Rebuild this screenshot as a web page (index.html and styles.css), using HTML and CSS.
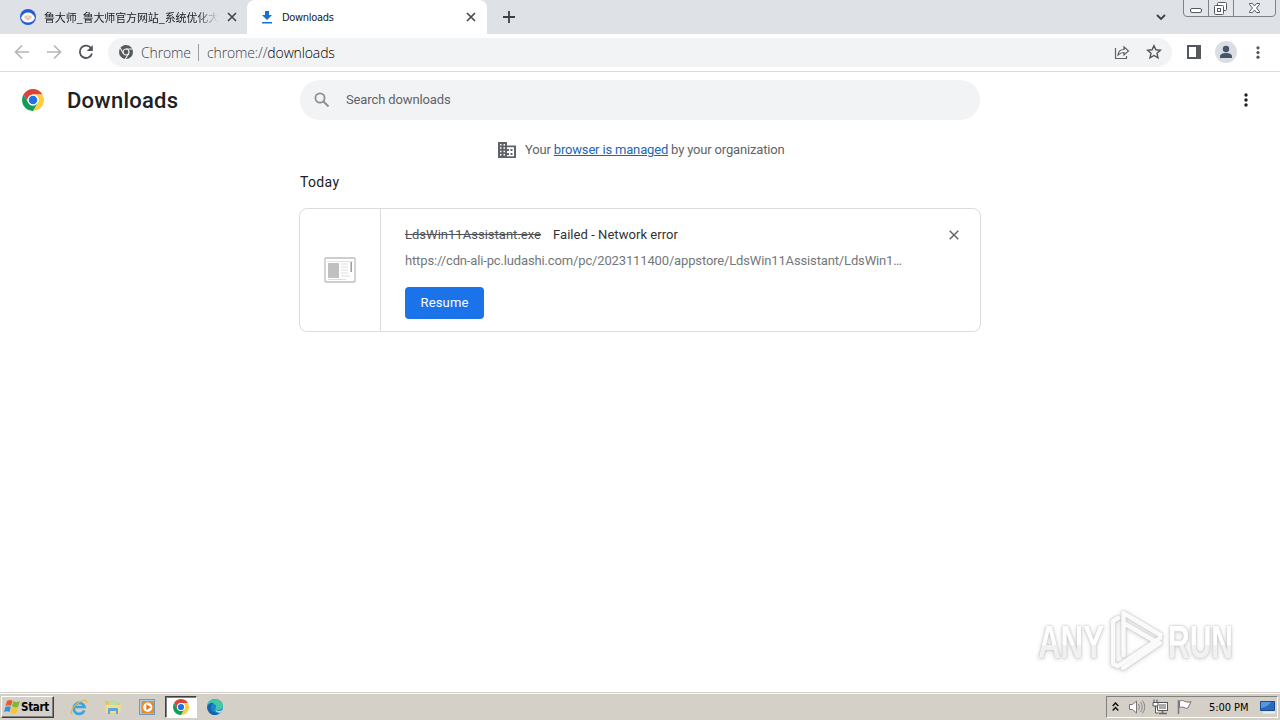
FILE: index.html
```html
<!DOCTYPE html>
<html lang="en">
<head>
<meta charset="utf-8">
<title>Downloads</title>
<link rel="stylesheet" href="styles.css">
</head>
<body>
<svg class="defs" aria-hidden="true">
  <symbol id="chrome" viewBox="0 0 48 48">
    <path fill="#db4437" d="M24 12H44.78A24 24 0 0 0 3.22 12L13.6 30A12 12 0 0 1 24 12z"/>
    <path fill="#ffcd40" transform="rotate(120 24 24)" d="M24 12H44.78A24 24 0 0 0 3.22 12L13.6 30A12 12 0 0 1 24 12z"/>
    <path fill="#0f9d58" transform="rotate(240 24 24)" d="M24 12H44.78A24 24 0 0 0 3.22 12L13.6 30A12 12 0 0 1 24 12z"/>
    <circle cx="24" cy="24" r="12" fill="#fff"/><circle cx="24" cy="24" r="9.3" fill="#1a73e8"/>
  </symbol>
  <symbol id="close" viewBox="0 0 10 10"><path d="M1 1l8 8M9 1l-8 8" fill="none" stroke="currentColor" stroke-width="1.7"/></symbol>
  <symbol id="dots" viewBox="0 0 4 14"><circle cx="2" cy="2" r="1.7"/><circle cx="2" cy="7" r="1.7"/><circle cx="2" cy="12" r="1.7"/></symbol>
  <linearGradient id="fade" x1="0" y1="0" x2="0" y2="1"><stop offset=".55" stop-color="#fff"/><stop offset=".56" stop-color="#f1f1f1"/></linearGradient>
</svg>
<div class="screen">
  <header class="tabstrip">
    <div class="tab tab-back">
      <svg class="favicon" viewBox="0 0 16 16"><circle cx="8" cy="8" r="8" fill="#2459df"/><path d="M1 9q2-5.500 7-5.500T15 9q-2 4.500-7 4.500T1 9z" fill="#fff"/><ellipse cx="8" cy="8.400" rx="4" ry="2.800" fill="#f4dfce"/><path d="M5.500 8h1.500M9 8h1.500M7 10h2" stroke="#a5877b" stroke-width=".7"/></svg>
      <span class="tab-title cjk">鲁大师_鲁大师官方网站_系统优化大</span>
      <svg class="tab-close"><use href="#close"/></svg>
    </div>
    <div class="tab tab-active">
      <svg class="dl-icon" viewBox="0 0 10 13"><path d="M3 0h4v4h3L5 9 0 4h3zM0 11h10v1.500H0z" fill="#1a70d2"/></svg>
      <span class="tab-title">Downloads</span>
      <svg class="tab-close"><use href="#close"/></svg>
    </div>
    <svg class="newtab" viewBox="0 0 12 12"><path d="M6 0v12M0 6h12" stroke="#3c4043" stroke-width="1.800"/></svg>
    <svg class="chevron" viewBox="0 0 10 6"><path d="M1 1l4 4 4-4" fill="none" stroke="#3c4043" stroke-width="1.800"/></svg>
    <svg class="winbtns" viewBox="0 0 94 17">
      <path d="M.5-1v14q0 3.500 3.500 3.500h85q3.500 0 3.500-3.500V-1" fill="#e3e6eb" stroke="#7e828a"/>
      <path d="M25.500 0v16M50.500 0v16" stroke="#7e828a"/>
      <g fill="#fff" stroke="#55595f"><rect x="7.500" y="8.500" width="11" height="4" rx="1.500"/><rect x="34.500" y="2.500" width="9" height="8" rx="1"/><rect x="31.500" y="5.500" width="9" height="9" rx="1"/><rect x="34.500" y="8.500" width="3" height="3"/><path d="M66.500 3.500h3l2 2.500 2-2.500h3v1l-3 3.500 3 3.500v1h-3l-2-2.500-2 2.500h-3v-1l3-3.500-3-3.500z"/></g>
    </svg>
  </header>

  <nav class="toolbar">
    <svg class="nav-icon" viewBox="0 0 16 16"><path d="M15 8H2M8 1.500L1.500 8 8 14.500" fill="none" stroke="#b4b7ba" stroke-width="1.700"/></svg>
    <svg class="nav-icon" viewBox="0 0 16 16"><path d="M1 8h13M8 1.500L14.500 8 8 14.500" fill="none" stroke="#b4b7ba" stroke-width="1.700"/></svg>
    <svg class="nav-icon" viewBox="0 0 16 16"><path d="M13.300 4.500A6.200 6.200 0 1 0 14 9.500" fill="none" stroke="#505357" stroke-width="1.800"/><path d="M14.800 1v6h-6z" fill="#505357"/></svg>
    <div class="omnibox">
      <svg class="omni-chrome" viewBox="0 0 14 14"><circle cx="7" cy="7" r="7" fill="#55585c"/><circle cx="7" cy="7" r="3" fill="none" stroke="#f1f3f4" stroke-width="1.200"/><path d="M7 4h6.500M4.400 8.500L1.200 3M9.600 8.500L6.400 14" stroke="#f1f3f4" stroke-width="1.100"/></svg>
      <span class="omni-label">Chrome</span>
      <span class="omni-sep"></span>
      <span class="omni-url">chrome://<b>downloads</b></span>
      <svg class="share" viewBox="0 0 16 16"><path d="M1.500 4v10.500h11V12M4 11q.5-5.500 6-5.500V2.800L14.500 7 10 11V8.500q-3.500 0-6 2.500z" fill="none" stroke="#5f6368" stroke-width="1.200"/></svg>
      <svg class="star" viewBox="0 0 16 16"><path d="M8 1.700l1.900 4.100 4.500.5-3.400 3 1 4.500L8 11.500l-4 2.300 1-4.500-3.400-3 4.500-.5z" fill="none" stroke="#505357" stroke-width="1.400"/></svg>
    </div>
    <svg class="panel" viewBox="0 0 14 14"><path d="M1 1h12v12H1z" fill="none" stroke="#55585c" stroke-width="2"/><path d="M9 1h5v12H9z" fill="#55585c"/></svg>
    <svg class="avatar" viewBox="0 0 22 22"><circle cx="11" cy="11" r="11" fill="#dadde3"/><circle cx="11" cy="8" r="3.200" fill="#46536c"/><path d="M5 17v-1.500q0-3.500 6-3.500t6 3.500V17z" fill="#46536c"/></svg>
    <svg class="menu-dots"><use href="#dots"/></svg>
  </nav>

  <main class="page">
    <div class="page-head">
      <svg class="logo"><use href="#chrome"/></svg>
      <h1>Downloads</h1>
      <div class="search">
        <svg viewBox="0 0 16 16"><circle cx="6" cy="6" r="4.600" fill="none" stroke="#8b8e92" stroke-width="1.800"/><path d="M9.500 9.500l5 5" stroke="#8b8e92" stroke-width="2"/></svg>
        <span>Search downloads</span>
      </div>
      <svg class="page-dots"><use href="#dots"/></svg>
    </div>
    <div class="managed">
      <svg viewBox="0 0 18 16"><path d="M0 0h9v3.500h9V16H0z" fill="#5f6368"/><path d="M2 2h1.500v1.500H2zM5.500 2H7v1.500H5.500zM2 5.300h1.500v1.500H2zM5.500 5.300H7v1.500H5.500zM2 8.700h1.500v1.500H2zM5.500 8.700H7v1.500H5.500zM2 12h1.500v1.500H2zM5.500 12H7v1.500H5.500zM9 5.300h7v9H9z" fill="#fff"/><path d="M9 7h2v2H9zM12.500 7h2v2h-2zM9 11h2v2H9zM12.500 11h2v2h-2z" fill="#5f6368"/></svg>
      <span class="managed-text">Your <a>browser is managed</a> by your organization</span>
    </div>
    <section class="downloads">
      <h2>Today</h2>
      <article class="card">
        <div class="thumb"><svg viewBox="0 0 32 26"><rect x="1" y="1" width="30" height="24" rx="1" fill="#fff" stroke="#bdbdbd" stroke-width="1.300"/><path d="M3 4.500h26" stroke="#e2e2e2"/><path d="M4 6h11v15H4z" fill="#c0c0c0"/><path d="M17 7h7M17 10h7M17 13h7M17 16h7M17 19h9M4 22.500h18" stroke="#ddd"/><path d="M27.200 5v10" stroke="#999" stroke-width="1.500"/></svg></div>
        <div class="details">
          <div class="name-row"><s>LdsWin11Assistant.exe</s><span class="status">Failed - Network error</span></div>
          <div class="url">https://cdn-ali-pc.ludashi.com/pc/2023111400/appstore/LdsWin11Assistant/LdsWin1…</div>
          <div class="resume">Resume</div>
        </div>
        <svg class="card-close" viewBox="0 0 10 10"><path d="M.7.7l8.600 8.600M9.300.7L.7 9.300" stroke="#5f6368" stroke-width="1.400"/></svg>
      </article>
    </section>
  </main>

  <footer class="taskbar">
    <div class="start">
      <svg viewBox="0 0 17 16"><path d="M3 2q3-2 5.500-.3L7 7Q4.500 5.500 1.500 7z" fill="#e65c28"/><path d="M9.200 2Q12 4 16 2L14 8q-3 1.300-6-.5z" fill="#7db83a"/><path d="M1.300 8q3-1.500 5.500 0L5.500 13Q3 11.500 0 13z" fill="#3d8ddb"/><path d="M7.600 8.300q3 1.800 6.300.5l-1.500 5.400q-3 1.300-6-.7z" fill="#f8c431"/></svg>
      <span>Start</span>
    </div>
    <svg class="task ie" viewBox="0 0 18 18"><path d="M14.300 12.500A5.500 5.500 0 1 1 14.500 9H5" fill="none" stroke="#39a4df" stroke-width="2.700"/><path d="M2.500 16q-3-1 .5-6T12 3q5-2.500 4.500 2" fill="none" stroke="#e5b844" stroke-width="1.300"/></svg>
    <svg class="task" viewBox="0 0 18 18"><path d="M1 3h6l1.500 2H16V15H2z" fill="#e7c763"/><path d="M5 2.500h8v6H5z" fill="#b9dfa4"/><path d="M1 7h16l-1 8H2z" fill="#f5dc8c"/><path d="M4 16v-5q0-1 1-1h8q1 0 1 1v5h-2v-3H6v3z" fill="#58a9d9"/></svg>
    <svg class="task" viewBox="0 0 18 18"><rect x="1.500" y="1.500" width="15" height="15" fill="#a8cef0" stroke="#6a9cca"/><rect x="3.500" y="3" width="12.500" height="12.500" rx="1" fill="#f08a1c"/><circle cx="9.700" cy="9.200" r="4.600" fill="#fff"/><path d="M8.300 6.200l4.700 3-4.700 3z" fill="#e77716"/></svg>
    <div class="task-active"><svg><use href="#chrome"/></svg></div>
    <svg class="task edge" viewBox="0 0 18 18"><circle cx="9" cy="9" r="8" fill="#1688ce"/><path d="M1 9C1-1 17-1 17 8q0 4-5 4-3 0-2-2 1-4-3-4-5 0-6 5z" fill="#43c8a5"/><path d="M1 9q2-5 7-4-4 2-3 6t8 4q-3 3-7 1.500T1 9z" fill="#1762ac"/><path d="M10 10q-1 3 3 3 2 0 4-1.500Q16 14 13.500 15 8 14 10 10z" fill="#d4d0c8"/></svg>
    <div class="tray">
      <svg class="up" viewBox="0 0 7 10"><path d="M.7 4l2.800-3 2.800 3M.7 8.500l2.800-3 2.800 3" fill="none" stroke="#111" stroke-width="1.500"/></svg>
      <svg class="sound" viewBox="0 0 18 16"><path d="M1.500 5.500h3L8.500 2v12l-4-3.500h-3z" fill="#fff" stroke="#777"/><path d="M10.500 5q2 3 0 6M12.500 3q3.500 5 0 10M14.500 1.500q4.500 6.500 0 13" fill="none" stroke="#898989"/></svg>
      <svg class="network" viewBox="0 0 17 16"><rect x="5.500" y="3.500" width="10" height="8" fill="#fff" stroke="#555"/><path d="M7 5h7v5H7z" fill="#aaa"/><path d="M7 14.500h8M10.500 12v2" stroke="#666" stroke-width="1.500"/><path d="M2 .5v3M5 .5v3M1 3.500h5v3.500H1zM3.500 7v7h3" fill="#fff" stroke="#555"/></svg>
      <svg class="flag" viewBox="0 0 17 16"><path d="M2.500 1v14" stroke="#777" stroke-width="1.500"/><path d="M3.500 2q3-1.500 5.500.5 3 1.500 6 0L12 9q-2 1-4-.5-2-1-4.500 0z" fill="#fff" stroke="#777"/></svg>
      <span class="clock">5:00 PM</span>
      <svg class="desktop" viewBox="0 0 16 14"><path d="M.5 1.500h14v9H.5z" fill="#2869bd" stroke="#174e92"/><path d="M1 2h10q-3 5-10 6z" fill="#5497de"/><path d="M3 12.500h12" stroke="#eee" stroke-width="2"/></svg>
    </div>
  </footer>

  <svg class="watermark" viewBox="0 0 220 70">
    <g class="mark-letters"><text x="8" y="53" textLength="66" lengthAdjust="spacingAndGlyphs">ANY</text><text x="138" y="53" textLength="65" lengthAdjust="spacingAndGlyphs">RUN</text></g>
    <path class="mark-symbol" d="M93.500 8v42M93.500 8l37 22M93.500 18l33 19M130 38L93 63M88 13l-5 3v43l5 2 42-28"/>
  </svg>
</div>
</body>
</html>
```

FILE: styles.css
```css
* { box-sizing: border-box; }
body { margin: 0; font-family: Roboto, sans-serif; color: #202124; }
svg { display: block; flex: none; }
.defs { position: absolute; width: 0; height: 0; }
.screen { position: relative; display: flex; flex-direction: column; width: 1280px; height: 720px; overflow: hidden; background: #fff; }

.tabstrip { display: flex; height: 34px; background: #dee1e6; }
.tab { display: flex; align-items: center; height: 34px; font: 11px/16px "DejaVu Sans Condensed", "Noto Sans CJK SC", sans-serif; letter-spacing: -0.3px; }
.tab-back { width: 247px; padding: 0 10px 0 20px; border-bottom-right-radius: 8px; }
.tab-active { width: 240px; padding: 0 11px 0 15px; background: #fff; border-radius: 8px 8px 0 0; }
.favicon { width: 16px; height: 16px; margin-right: 8px; }
.dl-icon { width: 10px; height: 13px; margin-right: 10px; }
.tab-title { flex: 1; min-width: 0; padding-top: 1px; white-space: nowrap; }
.cjk { padding-top: 0; font-family: "Noto Sans CJK SC", sans-serif; font-size: 11px; letter-spacing: -0.13px; mask-image: linear-gradient(90deg, #000 88%, transparent); }
.tab-close { width: 10px; height: 10px; margin-left: 9px; color: #46494d; }
.newtab { width: 12px; height: 12px; margin: 11px 0 0 16px; }
.chevron { width: 10px; height: 6px; margin: 14px 17px 0 auto; }
.winbtns { width: 94px; height: 17px; margin-right: 3px; }

.toolbar { display: flex; align-items: center; height: 38px; padding: 0 20px 1px 14px; border-bottom: 1px solid #dadce0; }
.nav-icon { width: 16px; height: 16px; margin-right: 16px; }
.omnibox { display: flex; align-items: center; width: 1064px; height: 29px; margin-left: -2px; padding: 0 10px 0 11px; border-radius: 15px; background: #f1f3f4; font: 300 14px/20px "Open Sans", sans-serif; color: #3f444a; }
.omni-chrome { width: 14px; height: 14px; }
.omni-label { width: 50px; margin: 2px 0 0 8px; letter-spacing: -0.15px; }
.omni-sep { width: 1px; height: 17px; margin: 0 8px 0 7px; background: #9a9da1; }
.omni-url { margin-top: 2px; letter-spacing: -0.13px; }
.omni-url b { color: #000; font-weight: 300; }
.share { width: 16px; height: 16px; margin-left: auto; }
.star { width: 16px; height: 16px; margin-left: 16px; }
.panel { width: 14px; height: 14px; margin-left: 15px; }
.avatar { width: 22px; height: 22px; margin-left: 14px; }
.menu-dots { width: 4px; height: 13px; margin-left: auto; fill: #505357; }

.page { flex: 1; }
.page-head { display: flex; align-items: center; height: 56px; padding: 0 32px 0 22px; }
.logo { width: 22px; height: 22px; }
h1 { width: 233px; margin: 2px 0 0 23px; font-size: 22px; line-height: 28px; font-weight: 500; letter-spacing: 0.25px; }
.search { display: flex; align-items: center; gap: 16px; width: 680px; height: 40px; padding-left: 14px; border-radius: 20px; background: #f1f3f4; font-size: 13px; letter-spacing: -0.12px; color: #5f6368; }
.search svg { width: 16px; height: 16px; }
.search span { margin-top: -2px; }
.page-dots { width: 4px; height: 14px; margin-left: auto; fill: #202124; }
.managed { display: flex; align-items: center; height: 43px; padding-left: 498px; font-size: 13px; letter-spacing: -0.17px; color: #5f6368; }
.managed svg { width: 18px; height: 16px; margin-right: 9px; }
.managed a { color: #1967b5; text-decoration: underline; }
.downloads { width: 682px; margin: 0 auto; }
h2 { margin: 0 0 15px; padding: 1px 0 0 1px; font-size: 14px; line-height: 21px; font-weight: 400; letter-spacing: 0.35px; }
.card { display: flex; height: 124px; border: 1px solid #dadce0; border-radius: 8px; }
.thumb { display: grid; place-items: center; width: 81px; padding-right: 1px; border-right: 1px solid #dadce0; }
.thumb svg { width: 32px; height: 26px; }
.details { flex: 1; padding: 16px 0 0 24px; font-size: 13px; }
.name-row { display: flex; line-height: 20px; white-space: nowrap; }
s { width: 136px; margin-right: 12px; color: #505458; letter-spacing: 0.02px; }
.status { color: #303336; letter-spacing: 0.05px; }
.url { margin-top: 7px; line-height: 18px; color: #73777b; white-space: nowrap; letter-spacing: -0.145px; }
.resume { width: 79px; height: 32px; margin-top: 17px; border-radius: 4px; background: #1a73e8; color: #fff; text-align: center; line-height: 31px; letter-spacing: 0.15px; }
.card-close { width: 10px; height: 10px; margin: 21px 21px 0 0; }

.taskbar { display: flex; align-items: center; height: 28px; padding: 2px 2px 0 1px; background: #d4d0c8; box-shadow: inset 0 1px #d4d0c8, inset 0 2px #fff; font-family: "DejaVu Sans Condensed", sans-serif; font-size: 11px; color: #000; }
.start { display: flex; align-items: center; width: 53px; height: 22px; padding-left: 2px; border: 1px solid; border-color: #fff #404040 #404040 #fff; box-shadow: inset -1px -1px #808080; font-weight: 700; font-size: 11.5px; }
.start svg { width: 17px; height: 16px; }
.start span { letter-spacing: -0.3px; }
.task { width: 18px; height: 18px; margin-left: 16px; }
.ie { margin-left: 16px; }
.task-active { display: grid; place-items: center; width: 32px; height: 22px; margin-left: 9px; border: 1px solid; border-color: #404040 #fff #fff #404040; box-shadow: inset 1px 1px #808080; background: #fff; }
.task-active svg { width: 16px; height: 16px; }
.edge { margin-left: 9px; }
.tray { display: flex; align-items: center; width: 172px; height: 22px; margin-left: auto; padding: 0 1px 0 5px; border: 1px solid; border-color: #808080 #fff #fff #808080; }
.up { width: 7px; height: 10px; }
.sound { width: 18px; height: 16px; margin-left: 9px; }
.network { width: 17px; height: 16px; margin-left: 6px; }
.flag { width: 17px; height: 16px; margin-left: 7px; }
.clock { margin-left: 16px; letter-spacing: -0.05px; white-space: nowrap; }
.desktop { width: 16px; height: 14px; margin-left: auto; }

.watermark { position: absolute; left: 1030px; top: 605px; width: 220px; height: 70px; filter: drop-shadow(0 0 1px #bbb) drop-shadow(0 1px 2px #ddd); }
.mark-letters { font: 700 46px "Liberation Sans", sans-serif; fill: url(#fade); }
.mark-symbol { fill: none; stroke: #fafafa; stroke-width: 4.5px; stroke-linejoin: round; stroke-linecap: round; }
```
